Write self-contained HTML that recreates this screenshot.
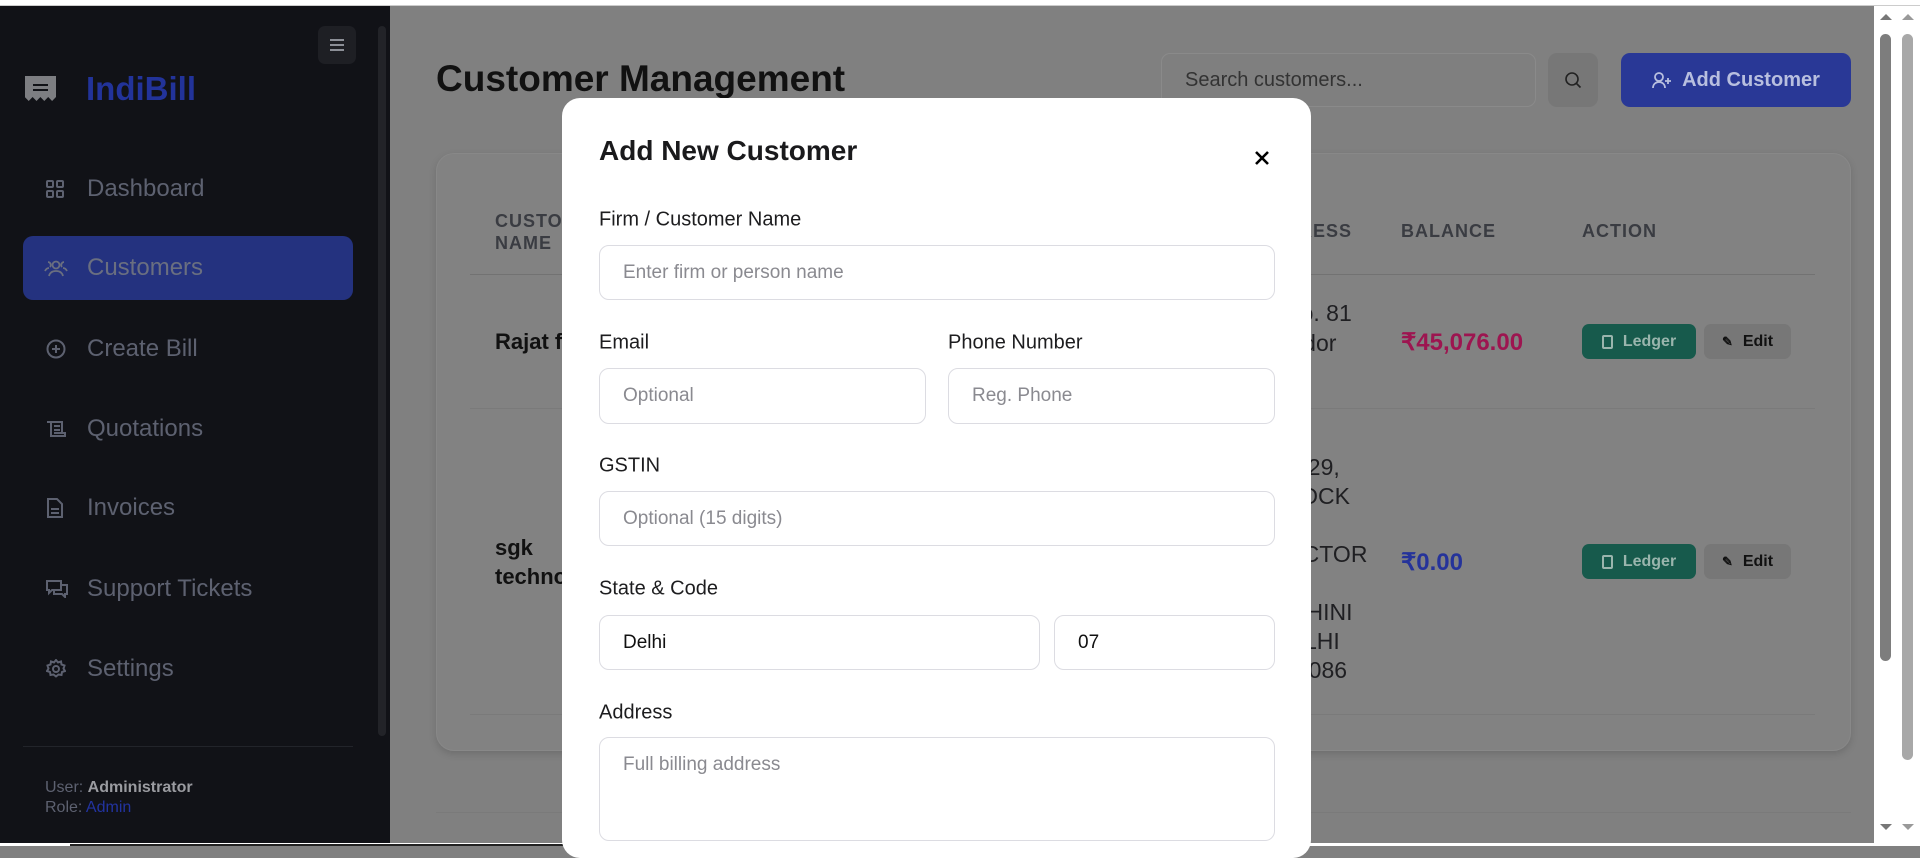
<!DOCTYPE html>
<html><head><meta charset="utf-8"><style>
*{box-sizing:border-box;margin:0;padding:0}
body{width:1920px;height:846px;overflow:hidden;background:#808080;font-family:"Liberation Sans",sans-serif;position:relative}
.abs{position:absolute}
.sb{left:0;top:6px;width:390px;height:840px;background:#111217}
.nav{position:absolute;left:87px;font-size:24px;color:#5d6170;transform:translateY(-50%)}
.ic{position:absolute;left:46px;transform:translateY(-50%)}
.lbl{position:absolute;left:599px;font-size:20px;color:#1d1d1f;transform:translateY(-50%)}
.inp{position:absolute;border:1px solid #dcdce2;border-radius:10px;background:#fff;font-size:19px;color:#8a8a90;padding-left:23px;display:flex;align-items:center}
.th{position:absolute;font-size:18px;font-weight:bold;color:#3a3c42;letter-spacing:1px}
.addr{position:absolute;left:1262px;width:100px;font-size:23px;color:#1f1f22;white-space:nowrap}
.btn{position:absolute;height:35px;border-radius:7px;font-size:16px;font-weight:bold;display:flex;align-items:center;justify-content:center;gap:10px}
</style></head><body>
<div class="abs" style="left:0;top:0;width:1920px;height:6px;background:#fff;border-bottom:1px solid #ccc"></div>
<div class="abs sb"></div>
<div class="abs" style="left:378px;top:26px;width:8px;height:710px;background:#222328;border-radius:4px"></div>
<div class="abs" style="left:318px;top:26px;width:38px;height:38px;background:#1e1f24;border-radius:7px"></div>
<svg class="abs" style="left:329px;top:38px" width="16" height="14"><path d="M1 2h14M1 7h14M1 12h14" stroke="#8c8f97" stroke-width="2"/></svg>
<svg class="abs" style="left:25px;top:76px" width="31" height="26"><path d="M0 0h31v21l-3.9 4-3.9-4-3.9 4-3.9-4-3.9 4-3.9-4-3.9 4-3.9-4z" fill="#7d7e82"/><path d="M8 9h15M8 14h15" stroke="#111217" stroke-width="2"/></svg>
<div class="abs" style="left:86px;top:70px;font-size:33px;font-weight:bold;color:#22339a">IndiBill</div>
<div class="abs" style="left:23px;top:236px;width:330px;height:64px;background:#24327f;border-radius:10px"></div>
<svg class="ic" style="top:189px" width="18" height="18" viewBox="0 0 18 18"><g fill="none" stroke="#5d6170" stroke-width="2"><rect x="1" y="1" width="6" height="6" rx="1"/><rect x="11" y="1" width="6" height="6" rx="1"/><rect x="1" y="11" width="6" height="6" rx="1"/><rect x="11" y="11" width="6" height="6" rx="1"/></g></svg>
<div class="nav" style="top:189px">Dashboard</div>
<svg class="ic" style="top:268px;left:44px" width="24" height="18" viewBox="0 0 24 18"><g fill="none" stroke="#6a6f80" stroke-width="1.8"><circle cx="12" cy="6" r="3.5"/><path d="M5 17c1-4 4-5 7-5s6 1 7 5"/><path d="M4 3a3 3 0 0 1 2 5M1 12c1-2 2-3 4-3M20 3a3 3 0 0 0-2 5M23 12c-1-2-2-3-4-3"/></g></svg>
<div class="nav" style="top:268px;color:#6a6f80">Customers</div>
<svg class="ic" style="top:349px" width="20" height="20" viewBox="0 0 20 20"><g fill="none" stroke="#5d6170" stroke-width="2"><circle cx="10" cy="10" r="8.5"/><path d="M10 6v8M6 10h8"/></g></svg>
<div class="nav" style="top:349px">Create Bill</div>
<svg class="ic" style="top:429px" width="20" height="20" viewBox="0 0 20 20"><g fill="none" stroke="#5d6170" stroke-width="2"><path d="M1 3h4v14h14v-3H8M5 3h11v11M8 7h6M8 11h6"/></g></svg>
<div class="nav" style="top:429px">Quotations</div>
<svg class="ic" style="top:508px" width="18" height="20" viewBox="0 0 18 20"><g fill="none" stroke="#5d6170" stroke-width="2"><path d="M2 1h9l5 5v13H2z"/><path d="M5 11h8M5 15h8"/></g></svg>
<div class="nav" style="top:508px">Invoices</div>
<svg class="ic" style="top:589px" width="22" height="18" viewBox="0 0 22 18"><g fill="none" stroke="#5d6170" stroke-width="2"><path d="M1 1h14v9H6l-3 3v-3H1z"/><path d="M15 5h6v9h-2v3l-3-3H8v-4"/></g></svg>
<div class="nav" style="top:589px">Support Tickets</div>
<svg class="ic" style="top:669px" width="20" height="20" viewBox="0 0 20 20"><g fill="none" stroke="#5d6170" stroke-width="2"><circle cx="10" cy="10" r="3"/><path d="M10 1l2 2.5 3-1 .5 3 3 1-1 3 1.5 2.5-3 1-.5 3-3-.5-2.5 2-2.5-2-3 .5-.5-3-3-1 1.5-2.5-1-3 3-1 .5-3 3 1z"/></g></svg>
<div class="nav" style="top:669px">Settings</div>
<div class="abs" style="left:23px;top:746px;width:330px;height:1px;background:#22242a"></div>
<div class="abs" style="left:45px;top:778px;font-size:16px;color:#5d6170;line-height:20px">User: <b style="color:#9a9ba0">Administrator</b><br>Role: <span style="color:#2233a0">Admin</span></div>

<div class="abs" style="left:436px;top:58px;font-size:37px;font-weight:bold;color:#111">Customer Management</div>
<div class="abs" style="left:1161px;top:53px;width:375px;height:54px;border:1px solid #8a8a8a;border-radius:9px;background:#7f7f7f;font-size:20px;color:#333;padding-left:23px;display:flex;align-items:center">Search customers...</div>
<div class="abs" style="left:1548px;top:53px;width:50px;height:54px;border-radius:9px;background:#777"></div>
<svg class="abs" style="left:1564px;top:71px" width="18" height="18"><g fill="none" stroke="#222" stroke-width="1.6"><circle cx="8" cy="8" r="6"/><path d="M12.5 12.5l4 4"/></g></svg>
<div class="abs" style="left:1621px;top:53px;width:230px;height:54px;border-radius:9px;background:#293896;color:#b8bfdf;font-size:20px;font-weight:bold;display:flex;align-items:center;justify-content:center;gap:10px"><svg width="20" height="18" viewBox="0 0 20 18"><g fill="none" stroke="#b8bfdf" stroke-width="1.8"><circle cx="7" cy="6" r="4"/><path d="M1 17c0-4 3-6 6-6s6 2 6 6M16 7v6M13 10h6"/></g></svg>Add Customer</div>

<div class="abs" style="left:436px;top:153px;width:1415px;height:598px;border:1px solid #888;border-radius:18px;background:#828282;box-shadow:0 3px 8px rgba(0,0,0,.15)"></div>
<div class="th" style="left:495px;top:210px;line-height:22px">CUSTOMER<br>NAME</div>
<div class="th" style="left:1257px;top:221px">ADDRESS</div>
<div class="th" style="left:1401px;top:221px">BALANCE</div>
<div class="th" style="left:1582px;top:221px">ACTION</div>
<div class="abs" style="left:470px;top:274px;width:1345px;height:1px;background:#727272"></div>
<div class="abs" style="left:470px;top:408px;width:1345px;height:1px;background:#7a7a7a"></div>
<div class="abs" style="left:470px;top:714px;width:1345px;height:1px;background:#7a7a7a"></div>
<div class="abs" style="left:436px;top:812px;width:1415px;height:1px;background:#7a7a7a"></div>
<div class="abs" style="left:495px;top:329px;font-size:22px;font-weight:bold;color:#111">Rajat fo</div>
<div class="abs" style="left:495px;top:533px;font-size:22px;font-weight:bold;color:#111;line-height:29px">sgk<br>technologies</div>
<div class="addr" style="top:298px;line-height:30px;left:1284px">No. 81<br>Indor</div>
<div class="addr" style="top:424px;line-height:29px;left:1272px">A-<br>A-229,<br>BLOCK<br><br>SECTOR<br><br>ROHINI<br>DELHI<br>110086</div>
<div class="abs" style="left:1401px;top:328px;font-size:24px;font-weight:bold;color:#9d1550">₹45,076.00</div>
<div class="abs" style="left:1401px;top:548px;font-size:24px;font-weight:bold;color:#25339a">₹0.00</div>
<div class="btn" style="left:1582px;top:324px;width:114px;background:#175a4c;color:#9ab5ad"><span style="width:11px;height:14px;border:2px solid #9ab5ad;border-radius:2px"></span>Ledger</div>
<div class="btn" style="left:1704px;top:324px;width:87px;background:#777;color:#111"><span style="font-size:13px">✎</span>Edit</div>
<div class="btn" style="left:1582px;top:544px;width:114px;background:#175a4c;color:#9ab5ad"><span style="width:11px;height:14px;border:2px solid #9ab5ad;border-radius:2px"></span>Ledger</div>
<div class="btn" style="left:1704px;top:544px;width:87px;background:#777;color:#111"><span style="font-size:13px">✎</span>Edit</div>

<div class="abs" style="left:0;top:843px;width:1874px;height:3px;background:#fff"></div>
<div class="abs" style="left:70px;top:844px;width:1120px;height:2px;background:#222"></div>

<div class="abs" style="left:562px;top:98px;width:749px;height:760px;background:#fff;border-radius:18px"></div>
<div class="abs" style="left:599px;top:135px;font-size:28px;font-weight:bold;color:#1a1a1c">Add New Customer</div>
<svg class="abs" style="left:1254px;top:150px" width="16" height="16"><path d="M2 2l12 12M14 2L2 14" stroke="#000" stroke-width="2.6"/></svg>
<div class="lbl" style="top:220px">Firm / Customer Name</div>
<div class="inp" style="left:599px;top:245px;width:676px;height:55px">Enter firm or person name</div>
<div class="lbl" style="top:343px">Email</div>
<div class="lbl" style="top:343px;left:948px">Phone Number</div>
<div class="inp" style="left:599px;top:368px;width:327px;height:56px">Optional</div>
<div class="inp" style="left:948px;top:368px;width:327px;height:56px">Reg. Phone</div>
<div class="lbl" style="top:466px">GSTIN</div>
<div class="inp" style="left:599px;top:491px;width:676px;height:55px">Optional (15 digits)</div>
<div class="lbl" style="top:589px">State &amp; Code</div>
<div class="inp" style="left:599px;top:615px;width:441px;height:55px;color:#111">Delhi</div>
<div class="inp" style="left:1054px;top:615px;width:221px;height:55px;color:#111">07</div>
<div class="lbl" style="top:713px">Address</div>
<div class="inp" style="left:599px;top:737px;width:676px;height:104px;align-items:flex-start;padding-top:16px">Full billing address</div>

<div class="abs" style="left:1874px;top:6px;width:46px;height:840px;background:#fff"></div>
<div class="abs" style="left:1880px;top:34px;width:11px;height:627px;background:#7d7d7d;border-radius:6px"></div>
<div class="abs" style="left:1902px;top:34px;width:11px;height:726px;background:#a8a8a8;border-radius:6px"></div>
<div class="abs" style="left:1880px;top:14px;width:0;height:0;border-left:6px solid transparent;border-right:6px solid transparent;border-bottom:6px solid #777"></div>
<div class="abs" style="left:1902px;top:14px;width:0;height:0;border-left:6px solid transparent;border-right:6px solid transparent;border-bottom:6px solid #999"></div>
<div class="abs" style="left:1880px;top:824px;width:0;height:0;border-left:6px solid transparent;border-right:6px solid transparent;border-top:6px solid #777"></div>
<div class="abs" style="left:1902px;top:824px;width:0;height:0;border-left:6px solid transparent;border-right:6px solid transparent;border-top:6px solid #999"></div>
</body></html>
